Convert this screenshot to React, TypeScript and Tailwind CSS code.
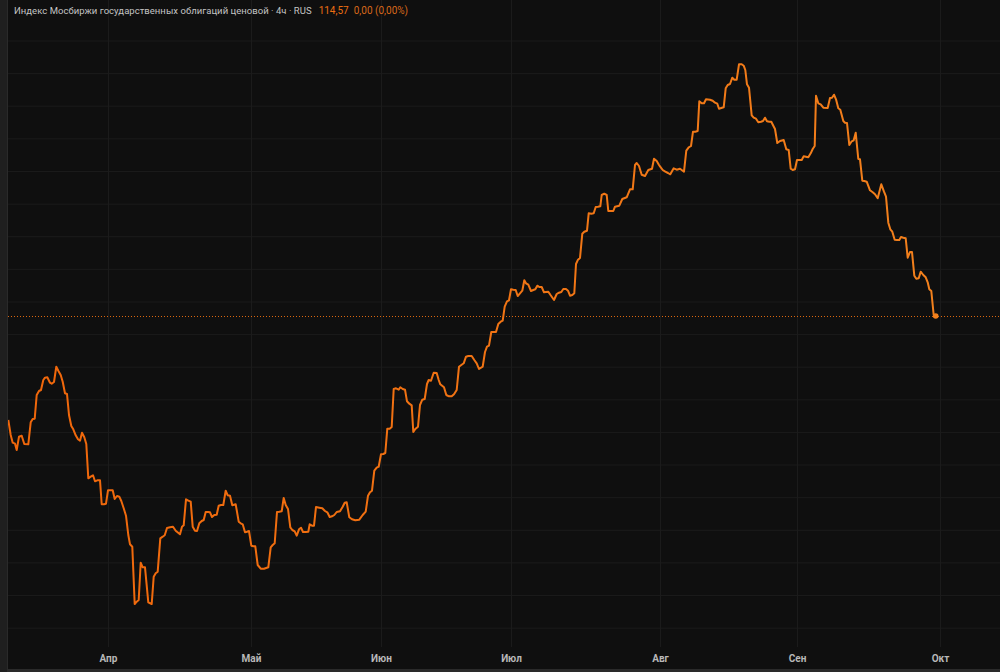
import { useMemo } from "react";

type Point = [number, number];

// Traced from 3x crops, each one has its own origin
const seg1: Point[] = [[25,210],[32,255],[38,278],[45,281],[50,300],[57,260],[65,257],[73,282],[85,283],[92,217],[98,207],[104,206],[110,135],[117,123],[123,120],[130,90],[135,83],[142,82],[150,98],[155,101],[162,96],[169,50],[175,62],[182,75],[188,95],[195,130],[201,132],[207,195],[214,228],[220,238],[227,256],[234,268],[240,272],[246,248],[253,262],[259,282],[265,385],[272,380],[279,376],[285,394],[292,391],[300,391],[305,463],[312,463],[318,461],[324,421],[331,421],[338,421],[344,447],[351,438],[358,440],[364,453],[371,475],[378,497],[385,555],[390,583],[397,590],[404,762],[410,755],[416,750],[422,638],[428,652],[435,652],[445,757],[455,762],[461,680],[467,670],[473,665],[481,565],[488,560],[494,556],[501,534],[510,532],[519,530],[527,542],[540,553],[546,530],[551,526],[558,448],[565,452],[572,455],[578,530],[585,542],[591,543],[598,520],[605,513],[611,510],[617,486],[624,486],[630,487],[636,501],[643,495],[650,494],[656,467],[663,465],[670,465],[677,422],[683,436],[690,437],[697,466],[707,463],[716,515],[722,520],[728,523],[735,547],[741,545],[747,543],[754,587],[760,589],[766,589],[773,645],[782,656],[792,656],[805,652],[812,592],[818,585],[824,580],[831,486],[838,485],[845,484],[851,444],[857,465],[864,477],[871,532],[877,540],[884,544],[890,557],[897,538],[903,533],[909,546],[917,546],[925,545],[929,523],[936,527],[942,527],[948,471],[958,473],[967,475],[975,483],[982,487],[989,501],[996,499],[1003,495],[1010,486],[1020,484]];
const seg2: Point[] = [[8,920],[14,908],[20,907],[28,952],[36,958],[46,961],[58,959],[68,945],[77,935],[84,887],[90,877],[96,872],[103,812],[110,803],[116,800],[123,763],[130,762],[136,759],[142,686],[149,686],[155,681],[161,567],[168,565],[176,569],[181,562],[188,567],[195,569],[201,604],[208,611],[215,616],[220,696],[226,687],[234,680],[240,615],[247,599],[254,597],[261,552],[266,540],[273,542],[281,518],[290,519],[296,540],[301,553],[312,562],[319,585],[327,589],[335,589],[342,583],[350,570],[357,500],[364,495],[371,490],[378,470],[385,468],[395,468],[403,480],[410,490],[417,507],[428,500],[435,456],[441,440],[447,437],[454,396],[461,396],[468,396],[475,372],[482,365],[488,362],[494,320],[501,304],[507,301],[513,268],[520,269],[527,270],[533,288],[540,280],[547,272],[553,241],[558,250],[565,254],[573,273],[580,270],[586,268],[592,257],[598,261],[605,261],[612,277],[618,276],[625,275],[632,286],[642,300],[650,282],[657,278],[664,276],[670,267],[678,267],[684,272],[690,287],[697,285],[703,280],[708,192],[714,179],[720,174],[727,101],[733,95],[741,92],[746,40],[754,41],[761,40],[767,21],[774,20],[781,19]];
const seg3: Point[] = [[50,165],[58,161],[65,165],[70,213],[85,213],[90,200],[103,197],[112,177],[125,172],[135,148],[143,148],[150,75],[155,69],[162,78],[170,104],[180,108],[190,90],[201,86],[207,56],[215,63],[222,75]];
const seg4: Point[] = [[0,349],[8,360],[16,365],[24,369],[31,373],[41,355],[50,359],[60,356],[72,365],[79,302],[86,292],[93,288],[99,245],[106,245],[113,243],[118,154],[125,160],[132,160],[138,148],[150,149],[158,152],[165,158],[172,161],[177,176],[184,174],[191,172],[197,115],[203,105],[210,102],[217,83],[223,89],[230,89],[237,43],[245,43],[251,47],[256,60],[261,103],[267,113],[275,196],[281,203],[288,206],[295,217],[303,215],[309,213],[315,203],[321,214],[328,215],[334,215],[340,227],[345,237],[352,279],[360,273],[371,270],[379,298],[386,300],[392,356],[398,360],[405,358],[411,330],[418,330],[425,330],[431,319],[438,320],[445,322],[452,310],[458,297],[464,288],[468,137],[475,160],[482,163],[490,173],[503,174],[510,144],[516,143],[522,134],[528,148],[535,175],[541,179],[550,213],[555,218],[561,219],[568,285],[575,274],[581,271],[587,248],[595,327],[600,328],[607,392],[613,393],[620,395],[630,421],[638,427],[645,433],[653,445],[664,403],[672,425],[678,440],[685,518],[691,538],[697,545],[704,569],[711,570],[718,570],[723,561],[730,563],[737,565],[743,623],[750,606],[756,606],[763,677],[769,686],[776,685],[782,665],[790,675],[797,682],[803,697],[808,718],[814,723],[821,795],[827,798]];

const project = (pts: Point[], ox: number, oy: number): Point[] =>
  pts.map(([x, y]) => [ox + x / 3, oy + y / 3]);

const hLines = Array.from({ length: 19 }, (_, i) => 41 + i * 32.62);
const months = [
  { label: "Апр", x: 108.5 },
  { label: "Май", x: 251.5 },
  { label: "Июн", x: 381.5 },
  { label: "Июл", x: 511.5 },
  { label: "Авг", x: 660.5 },
  { label: "Сен", x: 797.5 },
  { label: "Окт", x: 940.5 },
];

function PriceChart() {
  const path = useMemo(() => {
    const all = [
      ...project(seg1, 0, 350),
      ...project(seg2, 340, 200),
      ...project(seg3, 585, 140),
      ...project(seg4, 660, 50),
    ];
    return all.map(([x, y], i) => `${i ? "L" : "M"}${x.toFixed(1)} ${y.toFixed(1)}`).join("");
  }, []);

  return (
    <svg className="block h-full w-full" viewBox="8 0 992 669">
      <defs>
        <linearGradient id="line" x1="8" x2="936" y1="0" y2="0" gradientUnits="userSpaceOnUse">
          <stop offset="0" stopColor="#f0660a" />
          <stop offset="1" stopColor="#f2801c" />
        </linearGradient>
      </defs>

      {hLines.map((y) => (
        <line key={y} x1="8" x2="1000" y1={y} y2={y} stroke="#1b1b1b" strokeWidth="1" />
      ))}
      {months.map((m) => (
        <line key={m.x} x1={m.x} x2={m.x} y1="0" y2="647" stroke="#1b1b1b" strokeWidth="1" />
      ))}

      {/* Last price line */}
      <line x1="8" x2="1000" y1="316.5" y2="316.5" stroke="#d9660f" strokeWidth="1" strokeDasharray="1 2" />

      <path d={path} fill="none" stroke="url(#line)" strokeWidth="2" strokeLinejoin="round" />
      <circle cx="935.7" cy="316" r="2.8" fill="#f2801c" />

      {months.map((m) => (
        <text
          key={m.label}
          x={m.x}
          y="661.5"
          textAnchor="middle"
          fill="#b8b8b8"
          className="text-[10px] font-bold [font-family:Roboto,sans-serif]"
        >
          {m.label}
        </text>
      ))}
    </svg>
  );
}

export default function App() {
  return (
    <div className="flex h-[672px] w-[1000px] overflow-hidden bg-[#1f1f1f]">
      <div className="w-[7px] shrink-0 bg-[#1f1f1f]" />
      <div className="flex min-w-0 flex-1 flex-col">
        <div className="relative flex-1 border-l border-[#2a2a2a] bg-[#0f0f0f]">
          <div className="absolute left-[6px] top-[4.5px] flex items-center text-[9.5px] leading-[12px] [font-family:Roboto,sans-serif]">
            <span className="tracking-[0.035px] text-[#c4c4c4]">Индекс Мосбиржи государственных облигаций ценовой · 4ч · RUS</span>
            <span className="ml-[7px] text-[10px] text-[#ec6e12]">114,57</span>
            <span className="ml-[5px] text-[10px] text-[#d8681a]">0,00 (0,00%)</span>
          </div>
          <PriceChart />
        </div>
        <div className="h-[3px] shrink-0 bg-[#2a2a2a]" />
      </div>
    </div>
  );
}
